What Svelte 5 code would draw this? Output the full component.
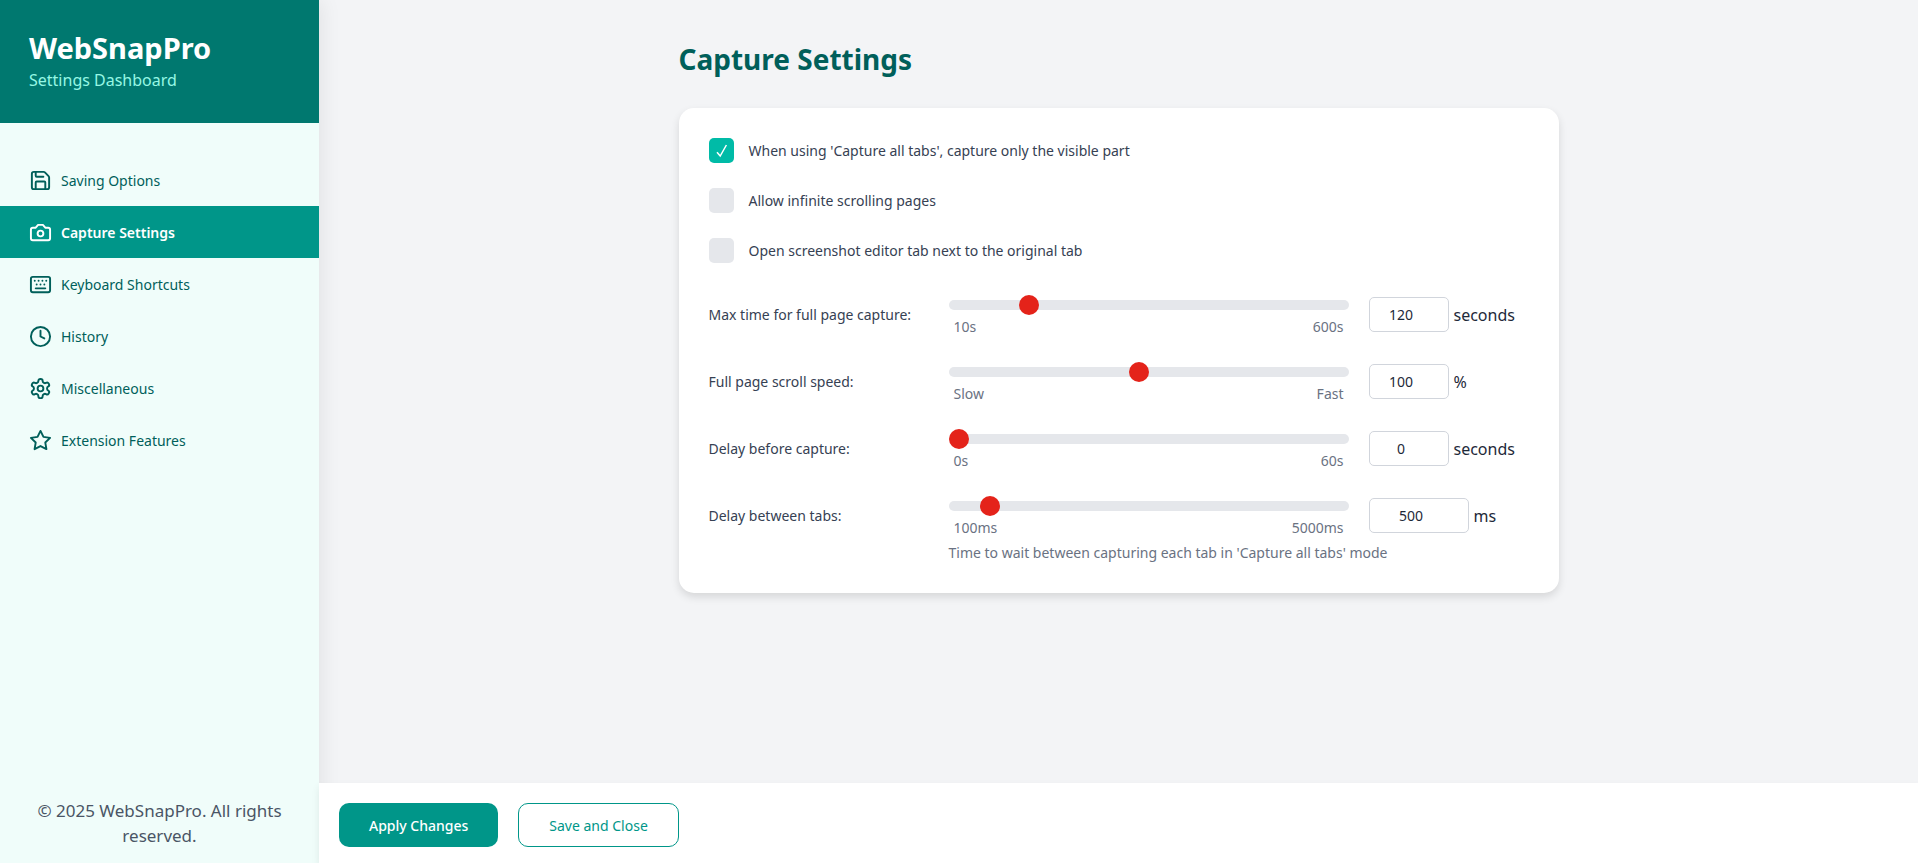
<script lang="ts">
	type NavItem = { label: string; paths: string[] };

	const navItems: NavItem[] = [
		{
			label: "Saving Options",
			paths: [
				"M15.2 3a2 2 0 0 1 1.4.6l3.8 3.8a2 2 0 0 1 .6 1.4V19a2 2 0 0 1-2 2H5a2 2 0 0 1-2-2V5a2 2 0 0 1 2-2z",
				"M17 21v-7a1 1 0 0 0-1-1H8a1 1 0 0 0-1 1v7",
				"M7 3v4a1 1 0 0 0 1 1h7"
			]
		},
		{
			label: "Capture Settings",
			paths: [
				"M14.5 4h-5L7 7H4a2 2 0 0 0-2 2v9a2 2 0 0 0 2 2h16a2 2 0 0 0 2-2V9a2 2 0 0 0-2-2h-3l-2.5-3z",
				"M12 10a3 3 0 1 0 0 6a3 3 0 1 0 0-6z"
			]
		},
		{
			label: "Keyboard Shortcuts",
			paths: [
				"M4 4h16a2 2 0 0 1 2 2v12a2 2 0 0 1-2 2H4a2 2 0 0 1-2-2V6a2 2 0 0 1 2-2z",
				"M6 8h.01M10 8h.01M14 8h.01M18 8h.01M8 12h.01M12 12h.01M16 12h.01",
				"M7 16h10"
			]
		},
		{
			label: "History",
			paths: ["M12 2a10 10 0 1 0 0 20a10 10 0 1 0 0-20z", "M12 6v6l4 2"]
		},
		{
			label: "Miscellaneous",
			paths: [
				"M12.22 2h-.44a2 2 0 0 0-2 2v.18a2 2 0 0 1-1 1.73l-.43.25a2 2 0 0 1-2 0l-.15-.08a2 2 0 0 0-2.73.73l-.22.38a2 2 0 0 0 .73 2.73l.15.1a2 2 0 0 1 1 1.72v.51a2 2 0 0 1-1 1.74l-.15.09a2 2 0 0 0-.73 2.73l.22.38a2 2 0 0 0 2.73.73l.15-.08a2 2 0 0 1 2 0l.43.25a2 2 0 0 1 1 1.73V20a2 2 0 0 0 2 2h.44a2 2 0 0 0 2-2v-.18a2 2 0 0 1 1-1.73l.43-.25a2 2 0 0 1 2 0l.15.08a2 2 0 0 0 2.73-.73l.22-.39a2 2 0 0 0-.73-2.73l-.15-.08a2 2 0 0 1-1-1.74v-.5a2 2 0 0 1 1-1.74l.15-.09a2 2 0 0 0 .73-2.73l-.22-.38a2 2 0 0 0-2.73-.73l-.15.08a2 2 0 0 1-2 0l-.43-.25a2 2 0 0 1-1-1.73V4a2 2 0 0 0-2-2z",
				"M12 9a3 3 0 1 0 0 6a3 3 0 1 0 0-6z"
			]
		},
		{
			label: "Extension Features",
			paths: [
				"M12 2l3.09 6.26L22 9.27l-5 4.87 1.18 6.88L12 17.77l-6.18 3.25L7 14.14 2 9.27l6.91-1.01L12 2z"
			]
		}
	];

	let active = $state("Capture Settings");

	let options = $state([
		{ label: "When using 'Capture all tabs', capture only the visible part", checked: true },
		{ label: "Allow infinite scrolling pages", checked: false },
		{ label: "Open screenshot editor tab next to the original tab", checked: false }
	]);

	let sliders = $state([
		{ id: "max-time", label: "Max time for full page capture:", min: 10, max: 600, value: 120, low: "10s", high: "600s", unit: "seconds", wide: false, hint: "" },
		{ id: "scroll-speed", label: "Full page scroll speed:", min: 10, max: 200, value: 100, low: "Slow", high: "Fast", unit: "%", wide: false, hint: "" },
		{ id: "delay-capture", label: "Delay before capture:", min: 0, max: 60, value: 0, low: "0s", high: "60s", unit: "seconds", wide: false, hint: "" },
		{ id: "delay-tabs", label: "Delay between tabs:", min: 100, max: 5000, value: 500, low: "100ms", high: "5000ms", unit: "ms", wide: true, hint: "Time to wait between capturing each tab in 'Capture all tabs' mode" }
	]);
</script>

<div class="app">
	<aside class="sidebar">
		<header class="brand">
			<h1>WebSnapPro</h1>
			<p>Settings Dashboard</p>
		</header>
		<nav>
			{#each navItems as item}
				<button
					type="button"
					class="nav-item"
					class:active={active === item.label}
					onclick={() => (active = item.label)}
				>
					<svg viewBox="0 0 24 24" aria-hidden="true">
						{#each item.paths as d}
							<path {d} />
						{/each}
					</svg>
					<span>{item.label}</span>
				</button>
			{/each}
		</nav>
		<p class="copyright">© 2025 WebSnapPro. All rights reserved.</p>
	</aside>

	<div class="content">
		<main>
			<div class="panel">
				<h2>Capture Settings</h2>
				<section class="card">
					{#each options as option}
						<label class="option">
							<input type="checkbox" bind:checked={option.checked} />
							<span>{option.label}</span>
						</label>
					{/each}

					<div class="sliders">
						{#each sliders as slider}
							<div class="slider-row">
								<label class="slider-label" for={slider.id}>{slider.label}</label>
								<div class="slider">
									<input
										type="range"
										id={slider.id}
										min={slider.min}
										max={slider.max}
										bind:value={slider.value}
									/>
									<div class="ticks">
										<span>{slider.low}</span>
										<span>{slider.high}</span>
									</div>
									{#if slider.hint}
										<p class="hint">{slider.hint}</p>
									{/if}
								</div>
								<label class="amount">
									<input
										type="number"
										class:wide={slider.wide}
										min={slider.min}
										max={slider.max}
										bind:value={slider.value}
									/>
									<span>{slider.unit}</span>
								</label>
							</div>
						{/each}
					</div>
				</section>
			</div>
		</main>
		<footer>
			<button type="button" class="primary">Apply Changes</button>
			<button type="button" class="secondary">Save and Close</button>
		</footer>
	</div>
</div>

<style>
	:global(body) {
		margin: 0;
	}

	.app {
		display: flex;
		min-height: 100vh;
		font-family: "Segoe UI", "Noto Sans", "Open Sans", sans-serif;
		font-size: 14px;
		color: #1e2939;
		background: #f3f4f6;
	}

	h1,
	h2,
	p {
		margin: 0;
	}

	button,
	input {
		font: inherit;
		box-sizing: border-box;
	}

	button {
		cursor: pointer;
	}

	.sidebar {
		display: flex;
		flex-direction: column;
		flex: 0 0 319px;
		background: #f0fdfa;
		box-shadow: 2px 0 20px rgba(0, 0, 0, 0.08);
	}

	.brand {
		padding: 28px 29px 30px;
		background: #00786f;
	}

	.brand h1 {
		font-size: 29px;
		line-height: 40px;
		font-weight: 700;
		color: #fff;
	}

	.brand p {
		font-size: 16px;
		line-height: 25px;
		color: #96f7e4;
	}

	nav {
		display: flex;
		flex-direction: column;
		flex: 1;
		padding-top: 31px;
	}

	.nav-item {
		display: flex;
		align-items: center;
		gap: 9px;
		height: 52px;
		padding: 0 29px;
		border: 0;
		background: none;
		color: #005f5a;
		text-align: left;
	}

	.nav-item.active {
		background: #009689;
		color: #fff;
		font-weight: 600;
	}

	.nav-item svg {
		width: 23px;
		height: 23px;
		fill: none;
		stroke: currentColor;
		stroke-width: 2;
		stroke-linecap: round;
		stroke-linejoin: round;
	}

	.copyright {
		padding: 0 30px 15px;
		font-size: 17px;
		line-height: 25px;
		text-align: center;
		color: #4a5565;
	}

	.content {
		display: flex;
		flex-direction: column;
		flex: 1;
		min-width: 0;
	}

	main {
		flex: 1;
		padding: 38px 30px 30px;
	}

	.panel {
		max-width: 880px;
		margin: 0 auto;
	}

	h2 {
		margin-bottom: 28px;
		font-size: 28px;
		line-height: 42px;
		font-weight: 700;
		color: #005f5a;
	}

	.card {
		padding: 30px;
		border-radius: 15px;
		background: #fff;
		box-shadow: 0 4px 8px rgba(0, 0, 0, 0.12);
	}

	.option {
		display: flex;
		align-items: center;
		gap: 15px;
		height: 25px;
		margin-bottom: 25px;
		color: #364153;
	}

	.option input {
		appearance: none;
		width: 25px;
		height: 25px;
		margin: 0;
		border-radius: 5px;
		background: #e5e7eb;
	}

	.option input:checked {
		background: #00bba7
			url("data:image/svg+xml,%3Csvg xmlns='http://www.w3.org/2000/svg' viewBox='0 0 25 25'%3E%3Cpath d='M8 14.2L11.2 18L17.4 7' fill='none' stroke='white' stroke-width='1.5'/%3E%3C/svg%3E");
	}

	.sliders {
		display: flex;
		flex-direction: column;
		gap: 27px;
		padding-top: 9px;
	}

	.slider-row {
		display: flex;
		align-items: flex-start;
	}

	.slider-label {
		flex: 0 0 240px;
		line-height: 36px;
		color: #364153;
	}

	.slider {
		flex: 0 1 400px;
		min-width: 0;
		padding-top: 3px;
	}

	.slider input {
		display: block;
		appearance: none;
		width: 100%;
		height: 10px;
		margin: 0;
		border-radius: 5px;
		background: #e5e7eb;
	}

	.slider input::-webkit-slider-thumb {
		appearance: none;
		width: 20px;
		height: 20px;
		border-radius: 50%;
		background: #e4231a;
	}

	.ticks {
		display: flex;
		justify-content: space-between;
		padding: 7px 5px 0;
		line-height: 20px;
		color: #6a7282;
	}

	.hint {
		padding-top: 5px;
		line-height: 20px;
		white-space: nowrap;
		color: #6a7282;
	}

	.amount {
		display: flex;
		align-items: center;
		gap: 5px;
		margin-left: 20px;
	}

	.amount input {
		width: 80px;
		height: 35px;
		padding: 0 10px;
		border: 1px solid #d1d5dc;
		border-radius: 5px;
		background: #fff;
		color: #1e2939;
		text-align: center;
	}

	.amount input.wide {
		width: 100px;
	}

	.amount span {
		font-size: 16px;
	}

	footer {
		display: flex;
		gap: 20px;
		padding: 20px 20px 16px;
		background: #fff;
		box-shadow: 0 4px 8px rgba(0, 0, 0, 0.08);
	}

	footer button {
		height: 44px;
		padding: 0 30px;
		border: 0;
		border-radius: 10px;
	}

	.primary {
		background: #009689;
		color: #fff;
		font-weight: 500;
	}

	footer .secondary {
		border: 1px solid #009689;
		background: #fff;
		color: #009689;
	}
</style>
